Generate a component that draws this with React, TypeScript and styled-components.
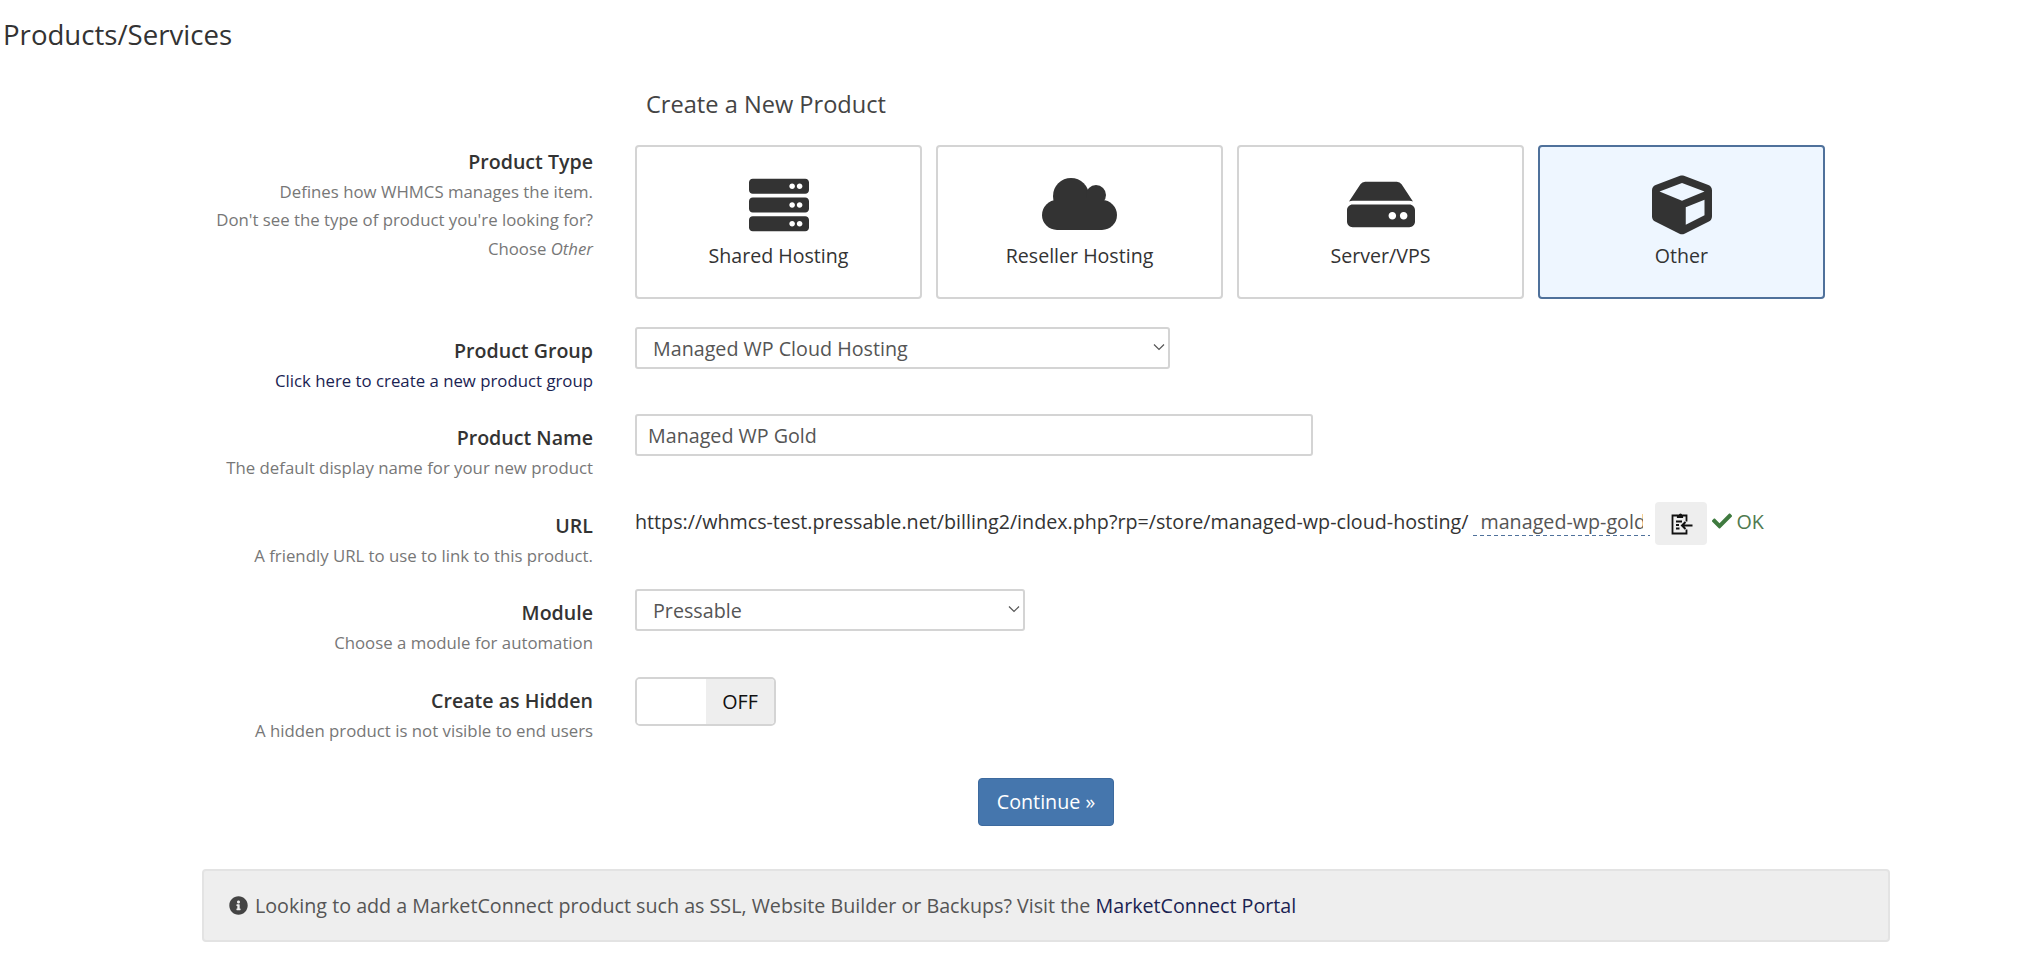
import React from 'react';
import styled, { createGlobalStyle } from 'styled-components';
import { FaServer, FaHdd, FaCube, FaCheck, FaInfoCircle } from 'react-icons/fa';

const GlobalStyle = createGlobalStyle`
  html, body {
    margin: 0;
    padding: 0;
    background: #fff;
    font-family: "Open Sans", "Liberation Sans", sans-serif;
    color: #333;
  }
  * {
    box-sizing: border-box;
  }
`;

const Page = styled.div`
  width: 2044px;
  height: 961px;
  overflow: hidden;
`;

const PageTitle = styled.h1`
  margin: 0;
  padding: 15px 0 0 3px;
  font-size: 27.6px;
  line-height: 38px;
  font-weight: 400;
  color: #333;
`;

const Container = styled.div`
  width: 1688px;
  margin-left: 202px;
`;

const FormTitle = styled.h2`
  margin: 0 0 0 444px;
  padding-top: 32px;
  height: 92px;
  font-size: 23.6px;
  line-height: 38px;
  font-weight: 400;
  color: #444;
`;

const Row = styled.div<{ $height?: number }>`
  display: grid;
  grid-template-columns: 391px 1fr;
  column-gap: 42px;
  height: ${(props) => props.$height ?? 87.4}px;
`;

const LabelCol = styled.div<{ $top?: number }>`
  padding-top: ${(props) => props.$top ?? 10}px;
  text-align: right;
`;

const Label = styled.div`
  font-size: 19.6px;
  line-height: 28px;
  font-weight: 600;
  color: #333;
`;

const Help = styled.div`
  margin-top: 2px;
  font-size: 16.8px;
  line-height: 28.4px;
  color: #777;

  & + & {
    margin-top: 0;
  }
`;

const HelpLink = styled(Help)`
  color: #1a2352;
`;

const FieldCol = styled.div`
  display: flex;
  align-items: flex-start;
`;

const Cards = styled.div`
  display: flex;
  gap: 14px;
`;

const Card = styled.div<{ $active?: boolean }>`
  width: 287px;
  height: 154px;
  padding-top: 28px;
  display: flex;
  flex-direction: column;
  align-items: center;
  border: 2px solid ${(props) => (props.$active ? '#4f719b' : '#d4d4d4')};
  border-radius: 4px;
  background: ${(props) => (props.$active ? '#eef6ff' : '#fff')};
  color: #333;
`;

const ServerIcon = styled(FaServer)`
  display: block;
  height: 60px;
  width: 60px;
`;

const CubeIcon = styled(FaCube)`
  display: block;
  height: 60px;
  width: 60px;
`;

const DriveIcon = styled(FaHdd)`
  display: block;
  height: 61px;
  width: 68px;
  margin: -1px 0 0;
`;

const CloudShape = styled.svg`
  display: block;
  width: 75px;
  height: 52px;
  margin: 3px 0 5px;
  fill: currentColor;
`;

const CloudIcon = () => (
  <CloudShape viewBox="0 0 75 52">
    <circle cx="29" cy="18" r="18" />
    <circle cx="54" cy="17" r="10" />
    <circle cx="15" cy="37" r="15" />
    <circle cx="60" cy="37" r="15" />
    <rect x="15" y="20" width="45" height="32" />
  </CloudShape>
);

const CardLabel = styled.div`
  margin-top: 7px;
  font-size: 19.6px;
  line-height: 28px;
  color: #333;
`;

const SelectWrap = styled.div<{ $width: number }>`
  position: relative;
  width: ${(props) => props.$width}px;
`;

const Select = styled.select`
  display: block;
  width: 100%;
  height: 42px;
  padding: 0 30px 0 16px;
  appearance: none;
  border: 2px solid #d4d4d4;
  border-radius: 3px;
  background: #fff;
  font-family: inherit;
  font-size: 19.7px;
  color: #555;
`;

const Chevron = styled.svg`
  position: absolute;
  right: 5px;
  top: 16px;
  width: 12px;
  height: 8px;
  fill: none;
  stroke: #555;
  stroke-width: 1.2;
`;

const TextInput = styled.input`
  display: block;
  width: 678px;
  height: 42px;
  padding: 0 11px;
  border: 2px solid #d4d4d4;
  border-radius: 3px;
  font-family: inherit;
  font-size: 19.7px;
  color: #555;
  outline: none;
`;

const UrlLine = styled.div`
  display: flex;
  align-items: center;
  height: 39px;
  font-size: 19.7px;
  color: #333;
`;

const SlugInput = styled.input`
  width: 177px;
  height: 30px;
  margin-left: 5px;
  padding: 0 7px;
  border: 0;
  background: repeating-linear-gradient(90deg, #4f719b 0 4px, transparent 4px 7px) bottom / 100% 1px no-repeat;
  font-family: inherit;
  font-size: 19.7px;
  color: #555;
  outline: none;
`;

const CopyButton = styled.div`
  width: 52px;
  height: 43px;
  margin-left: 5px;
  align-self: flex-start;
  display: flex;
  align-items: center;
  justify-content: center;
  background: #eee;
  border-radius: 4px;
`;

const SlugStatus = styled.span`
  display: inline-flex;
  align-items: center;
  gap: 4px;
  margin-left: 5px;
  color: #4f7a4f;

  svg {
    width: 20px;
    height: 20px;
    color: #3f7a3f;
  }
`;

const Toggle = styled.div`
  display: flex;
  width: 141px;
  height: 49px;
  border: 2px solid #d4d4d4;
  border-radius: 5px;
  overflow: hidden;
`;

const ToggleBlank = styled.div`
  width: 69px;
  background: #fff;
`;

const ToggleOff = styled.div`
  flex: 1;
  display: flex;
  align-items: center;
  justify-content: center;
  background: #eee;
  font-size: 19.7px;
  color: #111;
`;

const Actions = styled.div`
  display: flex;
  justify-content: center;
  margin-top: 14px;
`;

const ContinueButton = styled.button`
  width: 136px;
  height: 48px;
  border: 1px solid #3d6a9e;
  border-radius: 4px;
  background: #4576ad;
  color: #fff;
  font-family: inherit;
  font-size: 19.7px;
`;

const Notice = styled.div`
  display: flex;
  align-items: center;
  gap: 7px;
  height: 73px;
  margin-top: 43px;
  padding-left: 25px;
  background: #eee;
  border: 2px solid #e3e3e3;
  border-radius: 4px;
  font-size: 19.7px;
  color: #555;

  svg {
    width: 19px;
    height: 19px;
    color: #444;
  }

  a {
    color: #1a2352;
    text-decoration: none;
  }
`;

const ClipboardIcon = () => (
  <svg width="24" height="24" viewBox="0 0 24 24" fill="none" stroke="#111" strokeWidth="1.8">
    <path d="M8 4.5H3.5v18h14v-4M17.5 10.5V4.5H14" />
    <path d="M8.5 6.5V4h2a1 1 0 0 1 2 0h1v2.5z" fill="#111" strokeWidth="1.2" />
    <path d="M7 10.5h6M7 14h3M7 17.5h3.5" />
    <path d="M23.5 14.5H13M16.5 11l-3.5 3.5 3.5 3.5" strokeWidth="2" />
  </svg>
);

const SelectArrow = () => (
  <Chevron viewBox="0 0 12 8">
    <path d="M1 1.5l5 5 5-5" />
  </Chevron>
);

const productTypes = [
  { name: 'Shared Hosting', icon: <ServerIcon /> },
  { name: 'Reseller Hosting', icon: <CloudIcon /> },
  { name: 'Server/VPS', icon: <DriveIcon /> },
  { name: 'Other', icon: <CubeIcon />, active: true },
];

const App: React.FC = () => (
  <Page>
    <GlobalStyle />
    <PageTitle>Products/Services</PageTitle>
    <Container>
      <FormTitle>Create a New Product</FormTitle>

      <Row $height={182}>
        <LabelCol $top={3}>
          <Label>Product Type</Label>
          <Help>Defines how WHMCS manages the item.</Help>
          <Help>Don't see the type of product you're looking for?</Help>
          <Help>
            Choose <em>Other</em>
          </Help>
        </LabelCol>
        <FieldCol>
          <Cards>
            {productTypes.map((type) => (
              <Card key={type.name} $active={type.active}>
                {type.icon}
                <CardLabel>{type.name}</CardLabel>
              </Card>
            ))}
          </Cards>
        </FieldCol>
      </Row>

      <Row>
        <LabelCol>
          <Label>Product Group</Label>
          <HelpLink>Click here to create a new product group</HelpLink>
        </LabelCol>
        <FieldCol>
          <SelectWrap $width={535}>
            <Select defaultValue="Managed WP Cloud Hosting">
              <option>Managed WP Cloud Hosting</option>
            </Select>
            <SelectArrow />
          </SelectWrap>
        </FieldCol>
      </Row>

      <Row>
        <LabelCol>
          <Label>Product Name</Label>
          <Help>The default display name for your new product</Help>
        </LabelCol>
        <FieldCol>
          <TextInput defaultValue="Managed WP Gold" />
        </FieldCol>
      </Row>

      <Row>
        <LabelCol>
          <Label>URL</Label>
          <Help>A friendly URL to use to link to this product.</Help>
        </LabelCol>
        <FieldCol>
          <UrlLine>
            https://whmcs-test.pressable.net/billing2/index.php?rp=/store/managed-wp-cloud-hosting/
            <SlugInput defaultValue="managed-wp-gold" />
            <CopyButton>
              <ClipboardIcon />
            </CopyButton>
            <SlugStatus>
              <FaCheck /> OK
            </SlugStatus>
          </UrlLine>
        </FieldCol>
      </Row>

      <Row>
        <LabelCol>
          <Label>Module</Label>
          <Help>Choose a module for automation</Help>
        </LabelCol>
        <FieldCol>
          <SelectWrap $width={390}>
            <Select defaultValue="Pressable">
              <option>Pressable</option>
            </Select>
            <SelectArrow />
          </SelectWrap>
        </FieldCol>
      </Row>

      <Row>
        <LabelCol>
          <Label>Create as Hidden</Label>
          <Help>A hidden product is not visible to end users</Help>
        </LabelCol>
        <FieldCol>
          <Toggle>
            <ToggleBlank />
            <ToggleOff>OFF</ToggleOff>
          </Toggle>
        </FieldCol>
      </Row>

      <Actions>
        <ContinueButton>Continue »</ContinueButton>
      </Actions>

      <Notice>
        <FaInfoCircle />
        <span>
          Looking to add a MarketConnect product such as SSL, Website Builder or Backups? Visit the{' '}
          <a href="#portal">MarketConnect Portal</a>
        </span>
      </Notice>
    </Container>
  </Page>
);

export default App;
